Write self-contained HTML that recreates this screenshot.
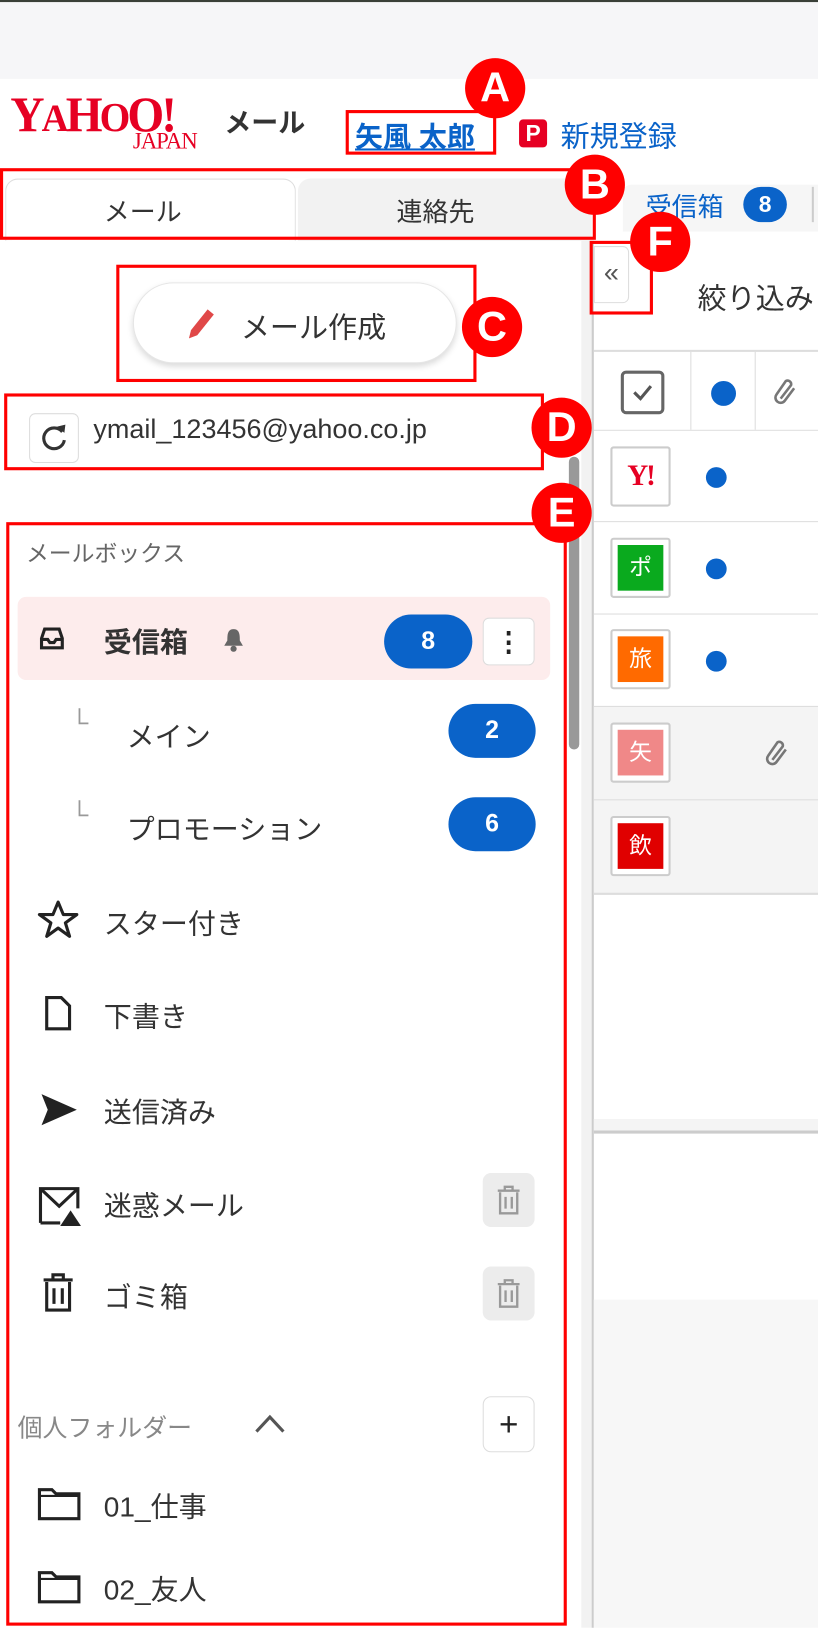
<!DOCTYPE html>
<html><head><meta charset="utf-8"><style>
*{margin:0;padding:0;box-sizing:border-box}
html,body{width:818px;height:1628px;overflow:hidden;background:#fff}
#w{position:absolute;left:0;top:0;width:788px;height:1568px;transform:scale(1.0381);transform-origin:0 0;font-family:"Liberation Sans","Noto Sans CJK JP",sans-serif;color:#333}
.a{position:absolute}
.rb{position:absolute;border:3px solid #f00}
.c{position:absolute;width:58px;height:58px;border-radius:50%;background:#f00;color:#fff;font:bold 40px/58px "Liberation Sans",sans-serif;text-align:center}
.t{position:absolute;font-size:27px;color:#333;white-space:nowrap}
.badge{position:absolute;background:#0a63c9;color:#fff;font:bold 24px/52px "Liberation Sans",sans-serif;text-align:center;border-radius:26px;height:52px}
.gb{position:absolute;width:50px;height:52px;border-radius:8px;background:#ececec}
.av{position:absolute;left:588px;width:58px;height:58px;border:2px solid #ccc;border-radius:3px;background:#fff}
.av div{position:absolute;left:5px;top:5px;width:44px;height:44px;color:#fff;font-size:22px;line-height:44px;text-align:center}
.dot{position:absolute;left:680px;width:20px;height:20px;border-radius:50%;background:#0a63c9}
</style></head><body><div id="w">
<div class="a" style="left:0;top:0;width:788px;height:76px;background:#f6f6f8;border-top:2px solid #3a4038"></div>
<!-- logo -->
<div class="a" style="left:10px;top:86px;font:bold 48px/50px 'Liberation Serif',serif;color:#e60023;letter-spacing:-3px;transform:scaleX(0.95);transform-origin:0 0;white-space:nowrap">Y<span style="font-size:38px">A</span>H<span style="font-size:40px">O</span>O!</div>
<div class="a" style="left:128px;top:124px;font:22px/24px 'Liberation Serif',serif;color:#e60023;letter-spacing:-1px">JAPAN</div>
<div class="a" style="left:216px;top:98px;font-weight:bold;font-size:26px;color:#333">メール</div>
<div class="a" style="left:342px;top:110px;font-weight:bold;font-size:27px;color:#0a63c9;text-decoration:underline">矢風 太郎</div>
<div class="rb" style="left:333px;top:106px;width:145px;height:43px"></div>
<div class="a" style="left:500px;top:115px;width:27px;height:27px;background:#e60023;border-radius:4px;color:#fff;font:bold 22px/27px sans-serif;text-align:center">P</div>
<div class="a" style="left:540px;top:110px;font-size:28px;color:#0a63c9">新規登録</div>
<!-- tabs -->
<div class="a" style="left:287px;top:172px;width:283px;height:60px;background:#f2f2f2;border-radius:12px 12px 0 0"></div>
<div class="a" style="left:5px;top:172px;width:280px;height:60px;background:#fff;border:1px solid #ddd;border-bottom:none;border-radius:12px 12px 0 0"></div>
<div class="t" style="left:100px;top:185px;font-size:25px">メール</div>
<div class="t" style="left:382px;top:185px;font-size:25px">連絡先</div>
<div class="rb" style="left:0;top:162px;width:574px;height:69px"></div>
<!-- right panel -->
<div class="a" style="left:560px;top:232px;width:12px;height:1336px;background:#f2f2f2;border-right:2px solid #ccc"></div>
<div class="a" style="left:600px;top:178px;width:188px;height:45px;background:#f6f6f6;border-radius:8px 0 0 0"></div>
<div class="t" style="left:622px;top:180px;font-size:25px;color:#0a63c9">受信箱</div>
<div class="a" style="left:716px;top:180px;width:42px;height:34px;border-radius:17px;background:#0a63c9;color:#fff;font:bold 22px/34px sans-serif;text-align:center">8</div>
<div class="a" style="left:782px;top:180px;width:2px;height:34px;background:#ccc"></div>
<div class="a" style="left:572px;top:237px;width:34px;height:55px;background:#fff;border:1px solid #ddd;border-radius:0 6px 6px 0;font-size:26px;line-height:48px;text-align:center;color:#555">«</div>
<div class="rb" style="left:568px;top:232px;width:61px;height:71px"></div>
<div class="t" style="left:672px;top:266px;font-size:28px">絞り込み</div>
<div class="a" style="left:572px;top:337px;width:216px;height:2px;background:#ddd"></div>
<div class="a" style="left:572px;top:414px;width:216px;height:1px;background:#ddd"></div>
<div class="a" style="left:665px;top:339px;width:1px;height:75px;background:#ddd"></div>
<div class="a" style="left:727px;top:339px;width:1px;height:75px;background:#ddd"></div>
<div class="a" style="left:598px;top:357px;width:42px;height:42px;border:3px solid #666;border-radius:5px"></div>
<svg class="a" style="left:608px;top:368px" width="22" height="20" viewBox="0 0 22 20"><path d="M3 10 L9 16 L19 4" fill="none" stroke="#555" stroke-width="3"/></svg>
<div class="a" style="left:685px;top:367px;width:24px;height:24px;border-radius:50%;background:#0a63c9"></div>
<svg class="a" style="left:744px;top:364px" width="26" height="28" viewBox="0 0 26 28"><path d="M8 20 L18 7 A3.5 3.5 0 0 0 13 3 L4 16 A5 5 0 0 0 12 22 L21 10" fill="none" stroke="#777" stroke-width="2.5"/></svg>
<div class="a" style="left:572px;top:502px;width:216px;height:1px;background:#ddd"></div>
<div class="a" style="left:572px;top:591px;width:216px;height:1px;background:#ddd"></div>
<div class="a" style="left:572px;top:680px;width:216px;height:182px;background:#f4f4f4;border-top:1px solid #ddd;border-bottom:2px solid #ddd"></div>
<div class="a" style="left:572px;top:770px;width:216px;height:1px;background:#ddd"></div>
<div class="av" style="top:430px"><div style="color:#e60023;font:bold 28px/44px 'Liberation Serif',serif;letter-spacing:-2px">Y!</div></div>
<div class="av" style="top:518px"><div style="background:#0aaa1e">ポ</div></div>
<div class="av" style="top:606px"><div style="background:#ff6a00">旅</div></div>
<div class="av" style="top:696px"><div style="background:#f08888">矢</div></div>
<div class="av" style="top:786px"><div style="background:#e00000">飲</div></div>
<div class="dot" style="top:450px"></div>
<div class="dot" style="top:538px"></div>
<div class="dot" style="top:627px"></div>
<svg class="a" style="left:736px;top:712px" width="26" height="28" viewBox="0 0 26 28"><path d="M8 20 L18 7 A3.5 3.5 0 0 0 13 3 L4 16 A5 5 0 0 0 12 22 L21 10" fill="none" stroke="#777" stroke-width="2.5"/></svg>
<div class="a" style="left:572px;top:1078px;width:216px;height:14px;background:#f4f4f4;border-bottom:3px solid #ccc"></div>
<div class="a" style="left:572px;top:1252px;width:216px;height:316px;background:#f7f7f7"></div>
<!-- compose -->
<div class="a" style="left:128px;top:272px;width:312px;height:78px;border-radius:39px;background:#fff;border:1px solid #e6e6e6;box-shadow:0 3px 6px rgba(0,0,0,.15)"></div>
<svg class="a" style="left:178px;top:294px" width="32" height="36" viewBox="0 0 32 36"><path d="M4 32 L6 24 L22 4 L28 9 L12 29 Z" fill="#e04848"/></svg>
<div class="t" style="left:232px;top:294px;font-size:28px">メール作成</div>
<div class="rb" style="left:112px;top:255px;width:347px;height:113px"></div>
<!-- account -->
<div class="a" style="left:28px;top:398px;width:48px;height:48px;border:1px solid #ddd;border-radius:6px"></div>
<svg class="a" style="left:38px;top:408px" width="28" height="28" viewBox="0 0 28 28"><path d="M22 8 A10 10 0 1 0 24 16" fill="none" stroke="#333" stroke-width="3"/><path d="M17 3 L24 9 L25 1 Z" fill="#333"/></svg>
<div class="t" style="left:90px;top:398px;font-size:26px">ymail_123456@yahoo.co.jp</div>
<div class="rb" style="left:4px;top:379px;width:520px;height:74px"></div>
<!-- scrollbar -->
<div class="a" style="left:548px;top:440px;width:10px;height:282px;border-radius:5px;background:#999"></div>
<!-- mailbox -->
<div class="t" style="left:25px;top:516px;font-size:22px;color:#666">メールボックス</div>
<div class="a" style="left:17px;top:575px;width:513px;height:80px;background:#fdecec;border-radius:8px"></div>
<svg class="a" style="left:38px;top:604px" width="24" height="22" viewBox="0 0 24 22"><path d="M2 11 L5 2 H19 L22 11 V20 H2 Z" fill="none" stroke="#222" stroke-width="3"/><path d="M2 12 H8 L10 15 H14 L16 12 H22" fill="none" stroke="#222" stroke-width="3"/></svg>
<div class="t" style="left:100px;top:597px;font-weight:bold">受信箱</div>
<svg class="a" style="left:214px;top:604px" width="22" height="24" viewBox="0 0 22 24"><path d="M11 2 C5 2 5 8 5 13 L2 18 H20 L17 13 C17 8 17 2 11 2 Z" fill="#666"/><circle cx="11" cy="21" r="3" fill="#666"/></svg>
<div class="badge" style="left:370px;top:592px;width:85px">8</div>
<div class="a" style="left:465px;top:595px;width:50px;height:46px;border:1px solid #ddd;border-radius:6px;background:#fff;font:bold 26px/44px sans-serif;text-align:center;color:#222">⋮</div>
<div class="t" style="left:68px;top:683px;color:#999;font-size:24px">└</div>
<div class="t" style="left:122px;top:688px">メイン</div>
<div class="badge" style="left:432px;top:678px;width:84px">2</div>
<div class="t" style="left:68px;top:772px;color:#999;font-size:24px">└</div>
<div class="t" style="left:122px;top:777px">プロモーション</div>
<div class="badge" style="left:432px;top:768px;width:84px">6</div>
<svg class="a" style="left:36px;top:866px" width="40" height="38" viewBox="0 0 40 38"><path d="M20 3 L25 15 L38 15 L27 23 L31 36 L20 28 L9 36 L13 23 L2 15 L15 15 Z" fill="none" stroke="#222" stroke-width="3" stroke-linejoin="round"/></svg>
<div class="t" style="left:100px;top:868px">スター付き</div>
<svg class="a" style="left:42px;top:958px" width="28" height="36" viewBox="0 0 28 36"><path d="M3 3 H17 L25 11 V33 H3 Z" fill="none" stroke="#222" stroke-width="3"/></svg>
<div class="t" style="left:100px;top:958px">下書き</div>
<svg class="a" style="left:38px;top:1052px" width="38" height="34" viewBox="0 0 38 34"><path d="M2 2 L36 17 L2 32 L8 17 Z" fill="#222"/></svg>
<div class="t" style="left:100px;top:1050px">送信済み</div>
<svg class="a" style="left:36px;top:1142px" width="44" height="40" viewBox="0 0 44 40"><path d="M3 36 V3 H39 V22 M3 36 H22" fill="none" stroke="#222" stroke-width="3"/><path d="M3 3 L21 20 L39 3" fill="none" stroke="#222" stroke-width="3"/><path d="M32 24 L42 39 H22 Z" fill="#222"/></svg>
<div class="t" style="left:100px;top:1140px">迷惑メール</div>
<div class="gb" style="left:465px;top:1130px"></div>
<svg class="a" style="left:40px;top:1225px" width="32" height="40" viewBox="0 0 32 40"><path d="M2 8 H30 M11 8 V3 H21 V8 M5 10 V37 H27 V10 M12 16 V31 M20 16 V31" fill="none" stroke="#222" stroke-width="3"/></svg>
<div class="t" style="left:100px;top:1228px">ゴミ箱</div>
<div class="gb" style="left:465px;top:1220px"></div>
<svg class="a" style="left:478px;top:1139px" width="24" height="34" viewBox="0 0 32 40"><path d="M2 8 H30 M11 8 V3 H21 V8 M5 10 V37 H27 V10 M12 16 V31 M20 16 V31" fill="none" stroke="#999" stroke-width="3"/></svg>
<svg class="a" style="left:478px;top:1229px" width="24" height="34" viewBox="0 0 32 40"><path d="M2 8 H30 M11 8 V3 H21 V8 M5 10 V37 H27 V10 M12 16 V31 M20 16 V31" fill="none" stroke="#999" stroke-width="3"/></svg>
<div class="t" style="left:17px;top:1356px;font-size:24px;color:#888">個人フォルダー</div>
<svg class="a" style="left:244px;top:1360px" width="32" height="22" viewBox="0 0 32 22"><path d="M3 19 L16 5 L29 19" fill="none" stroke="#555" stroke-width="3"/></svg>
<div class="a" style="left:465px;top:1345px;width:50px;height:54px;border:1px solid #ddd;border-radius:8px;font-size:32px;line-height:52px;text-align:center;color:#222">+</div>
<svg class="a" style="left:36px;top:1433px" width="42" height="32" viewBox="0 0 42 32"><path d="M2 2 H14 L18 6 H40 V30 H2 Z" fill="none" stroke="#222" stroke-width="3"/><path d="M2 8 H40" stroke="#222" stroke-width="2"/></svg>
<div class="t" style="left:100px;top:1430px">01_仕事</div>
<svg class="a" style="left:36px;top:1513px" width="42" height="32" viewBox="0 0 42 32"><path d="M2 2 H14 L18 6 H40 V30 H2 Z" fill="none" stroke="#222" stroke-width="3"/><path d="M2 8 H40" stroke="#222" stroke-width="2"/></svg>
<div class="t" style="left:100px;top:1510px">02_友人</div>
<div class="rb" style="left:6px;top:503px;width:540px;height:1063px"></div>
<!-- circles -->
<div class="c" style="left:448px;top:56px">A</div>
<div class="c" style="left:544px;top:149px">B</div>
<div class="c" style="left:445px;top:286px">C</div>
<div class="c" style="left:512px;top:383px">D</div>
<div class="c" style="left:512px;top:465px">E</div>
<div class="c" style="left:607px;top:204px">F</div>
</div></body></html>
